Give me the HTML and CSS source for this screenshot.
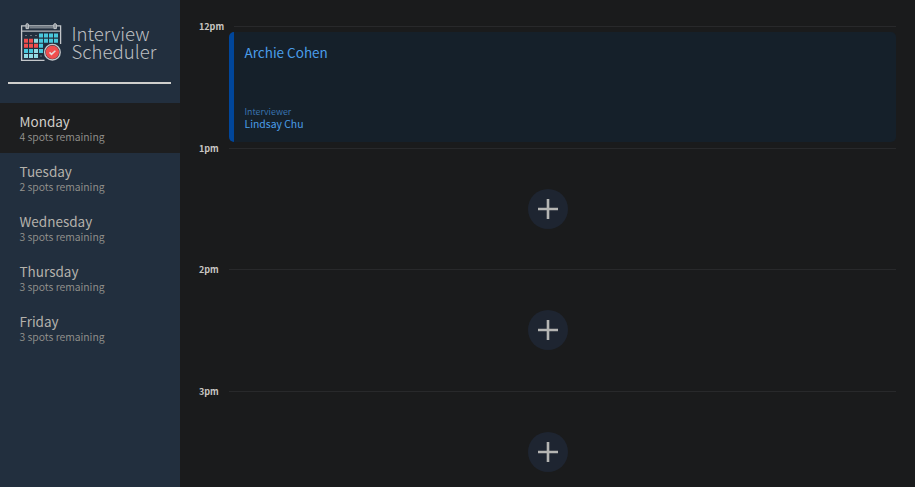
FILE: index.html
```html
<!DOCTYPE html>
<html lang="en">
<head>
<meta charset="utf-8">
<title>Interview Scheduler</title>
<link rel="stylesheet" href="styles.css">
</head>
<body>
<main class="layout">
  <aside class="sidebar">
    <div class="brand">
      <svg class="brand-icon" viewBox="20 22 43 40" width="43" height="40" fill="none">
        <path d="M44.5 60.4H21.6V25.8H60.6V44" stroke="#c4c7ca" stroke-width="1.3"/>
        <path d="M29.5 27.8H53" stroke="#8d949b" stroke-width="1.2"/>
        <path d="M22 31.2H60.5" stroke="#b4b8bc" stroke-width="1.3"/>
        <path d="M26 28.6V24.3q1.2-1.5 2.6 0v4.3zM53.8 28.6V24.3q1.2-1.5 2.6 0v4.3z" stroke="#c4c7ca" fill="#8d949b"/>
        <path d="M39 33.6h4v4h-4zM44 33.6h4v4h-4zM49 33.6h4v4h-4zM54 33.6h4v4h-4zM39 38.7h4v4h-4zM44 38.7h4v4h-4zM49 38.7h4v4h-4zM54 38.7h4v4h-4zM39 43.8h4v4h-4zM24 48.9h4v4h-4zM29 48.9h4v4h-4zM39 48.9h4v4h-4z" fill="#48c8dc"/>
        <path d="M34 38.7h4v4h-4zM34 48.9h4v4h-4zM24 54h4v4h-4zM29 54h4v4h-4zM34 54h4v4h-4z" fill="#92dce4"/>
        <path d="M24 38.7h4v4h-4zM29 38.7h4v4h-4zM24 43.8h4v4h-4zM29 43.8h4v4h-4zM34 43.8h4v4h-4z" fill="#f04e4e"/>
        <path d="M25.5 35.1h1v1h-1zM30.5 35.1h1v1h-1zM35.5 35.1h1v1h-1zM40.5 55.5h1v1h-1z" fill="#b4b8bc"/>
        <circle cx="52.4" cy="52.2" r="9.3" fill="#222f3e"/>
        <circle cx="52.4" cy="52.2" r="7.8" fill="#222f3e" stroke="#c4c7ca" stroke-width="1.4"/>
        <circle cx="52.4" cy="52.2" r="6.7" fill="#f04e4e"/>
        <path d="M49.5 52.4l2 2 3.9-3.7" stroke="#e6dada" stroke-width="1.5"/>
      </svg>
      <h1 class="brand-name">Interview<br>Scheduler</h1>
    </div>
    <hr class="rule">
    <nav class="days">
      <div class="day day-selected"><h2>Monday</h2><p>4 spots remaining</p></div>
      <div class="day"><h2>Tuesday</h2><p>2 spots remaining</p></div>
      <div class="day"><h2>Wednesday</h2><p>3 spots remaining</p></div>
      <div class="day"><h2>Thursday</h2><p>3 spots remaining</p></div>
      <div class="day"><h2>Friday</h2><p>3 spots remaining</p></div>
    </nav>
  </aside>
  <section class="schedule">
    <article class="slot">
      <header class="slot-time"><h4>12pm</h4><hr></header>
      <div class="card">
        <h2 class="student">Archie Cohen</h2>
        <div><h4 class="role">Interviewer</h4><h3 class="interviewer">Lindsay Chu</h3></div>
      </div>
    </article>
    <article class="slot">
      <header class="slot-time"><h4>1pm</h4><hr></header>
      <div class="empty"><button class="add" aria-label="Add"><svg width="20" height="20"><path d="M10 0v20M0 10h20" stroke="#b5b5b3" stroke-width="2.6"/></svg></button></div>
    </article>
    <article class="slot">
      <header class="slot-time"><h4>2pm</h4><hr></header>
      <div class="empty"><button class="add" aria-label="Add"><svg width="20" height="20"><path d="M10 0v20M0 10h20" stroke="#b5b5b3" stroke-width="2.6"/></svg></button></div>
    </article>
    <article class="slot">
      <header class="slot-time"><h4>3pm</h4><hr></header>
      <div class="empty"><button class="add" aria-label="Add"><svg width="20" height="20"><path d="M10 0v20M0 10h20" stroke="#b5b5b3" stroke-width="2.6"/></svg></button></div>
    </article>
  </section>
</main>
</body>
</html>
```
FILE: styles.css
```css
* { box-sizing: border-box; }
body, h1, h2, h3, h4, p, hr { margin: 0; }
body {
  background: #1a1b1c;
  font-family: "Noto Sans CJK SC", "Noto Sans", sans-serif;
  overflow: hidden;
}
.layout { display: flex; height: 487px; overflow: hidden; }
.sidebar { width: 180px; flex: none; background: #222f3e; }
.brand { display: flex; gap: 8.5px; padding: 22px 0 0 20px; height: 82px; }
.brand-icon { flex: none; }
.brand-name { margin-top: 2px; font-size: 18.6px; font-weight: 300; line-height: 18px; color: #bcbfc1; }
.rule { width: 163px; height: 1.5px; margin: 0 8px 19.5px; border: 0; background: #cfcfcc; }
.day { height: 50px; padding: 9px 19.5px 0; color: #b4b1ab; }
.day h2 { font-size: 13.5px; font-weight: 400; line-height: 19px; }
.day p { font-size: 10.4px; font-weight: 350; line-height: 12px; color: #96948f; }
.day-selected { background: #1d1e1f; color: #d0cdc8; }
.schedule { flex: 1; padding: 20px 19px 0 19px; }
.slot { height: 121.7px; }
.slot-time { display: flex; gap: 10px; height: 12px; }
.slot-time h4 { font-size: 9px; font-weight: 700; line-height: 14px; color: #c8c6c2; }
.slot-time hr { flex: 1; height: 1px; margin-top: 6px; border: 0; background: #28292b; }
.card {
  display: flex; flex-direction: column; justify-content: space-between;
  height: 110px; margin-left: 30px; padding: 10px 10px 12px 10.5px;
  border-left: 5px solid #00469b; border-radius: 5px; background: #15202a;
  color: #4a9de8;
}
.student { font-size: 13.5px; font-weight: 400; line-height: 20px; }
.role { font-size: 8.9px; font-weight: 350; line-height: 12px; color: #3c79b8; }
.interviewer { font-size: 10.4px; font-weight: 400; line-height: 12px; }
.empty { display: grid; place-items: center; height: 110px; }
.add {
  display: grid; place-items: center; width: 40px; height: 40px; padding: 0;
  border: 0; border-radius: 50%; background: #1e2531;
}
```
